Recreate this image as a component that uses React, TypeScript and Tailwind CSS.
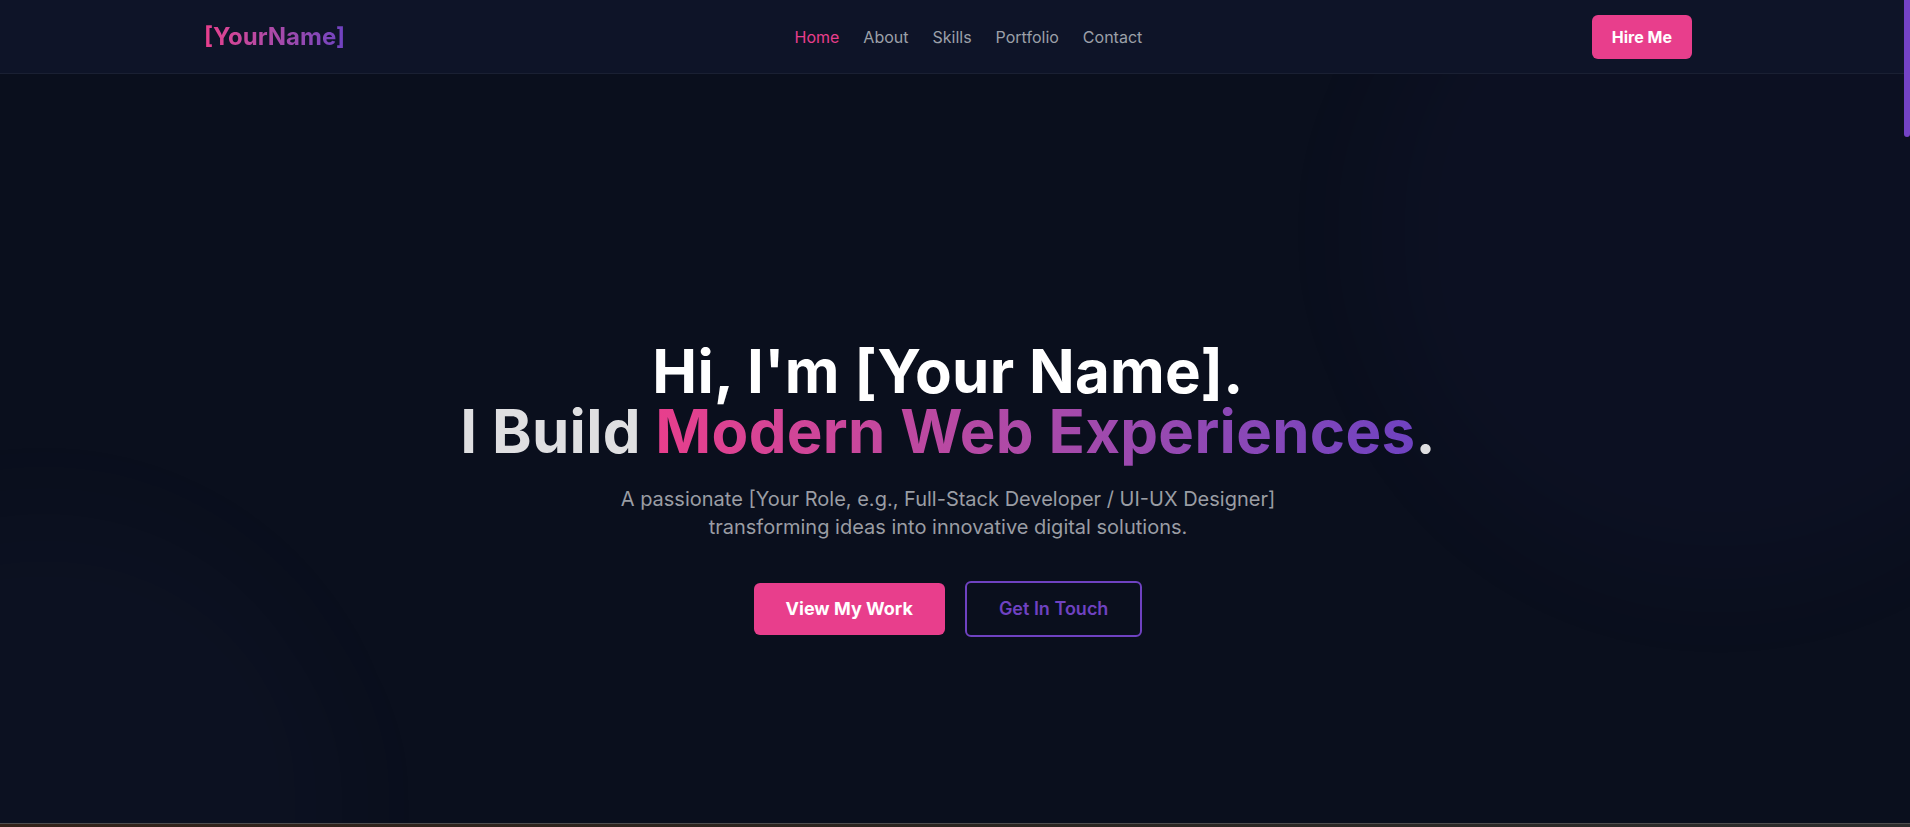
import React from 'react';

const navLinks = ['Home', 'About', 'Skills', 'Portfolio', 'Contact'];

const App: React.FC = () => {
  return (
    <div className="relative h-[827px] flex flex-col overflow-hidden bg-[#0a0f1d] font-['Inter','Noto_Sans',sans-serif] antialiased">
      {/* Header */}
      <header className="h-[74px] shrink-0 bg-[#0e1428] border-b border-white/5 pr-[14px]">
        <div className="mx-auto max-w-[1536px] px-6 h-full flex items-center justify-between">
          <a href="#home" className="text-2xl font-bold bg-gradient-to-r from-[#e83e8c] to-[#6f42c1] bg-clip-text text-transparent">
            [YourName]
          </a>
          <nav className="flex items-center gap-6 text-base">
            {navLinks.map((link, i) => (
              <a
                key={link}
                href={`#${link.toLowerCase()}`}
                className={i === 0 ? 'text-[#e83e8c]' : 'text-[#9ca0a8] hover:text-white'}
              >
                {link}
              </a>
            ))}
          </nav>
          <button className="bg-[#e83e8c] text-white font-bold text-base px-5 py-2.5 rounded-md">
            Hire Me
          </button>
        </div>
      </header>

      {/* Hero */}
      <section id="home" className="relative overflow-hidden flex-1 flex items-center justify-center pt-20 pr-[14px] text-center">
        <div className="absolute -top-48 -right-40 w-[700px] h-[700px] rounded-full bg-[#6f42c1]/[0.03] blur-[50px]"></div>
        <div className="absolute -bottom-72 -left-64 w-[600px] h-[600px] rounded-full bg-[#8b7bd6]/[0.025] blur-[50px]"></div>
        <div className="relative z-10 px-6">
          <h1 className="text-6xl font-bold leading-none tracking-[0.3px] mb-6">
            <span className="block text-white">Hi, I'm [Your Name].</span>
            <span className="block text-[#dfdfe1]">
              I Build{' '}
              <span className="bg-gradient-to-r from-[#e83e8c] to-[#6f42c1] bg-clip-text text-transparent">
                Modern Web Experiences
              </span>
              .
            </span>
          </h1>
          <p className="text-xl text-[#9a9da4] max-w-2xl mx-auto mb-10">
            A passionate [Your Role, e.g., Full-Stack Developer / UI-UX Designer] transforming ideas into innovative digital solutions.
          </p>
          <div className="flex items-center justify-center gap-5">
            <a href="#portfolio" className="bg-[#e83e8c] text-white text-lg font-bold px-8 py-3 rounded-md">
              View My Work
            </a>
            <a href="#contact" className="border-2 border-[#6f42c1] text-[#6f42c1] text-lg font-semibold px-8 py-3 rounded-md">
              Get In Touch
            </a>
          </div>
        </div>
      </section>

      {/* Window edge strip */}
      <div className="h-1 shrink-0 border-t border-[#4e4e4e] bg-gradient-to-r from-[#34231a] via-[#2b2520] to-[#2d2d2d]"></div>

      {/* Scrollbar thumb overlay */}
      <div className="absolute top-0 right-0 w-1.5 h-[137px] bg-[#7443c6] rounded-b-sm"></div>
    </div>
  );
};

export default App;
